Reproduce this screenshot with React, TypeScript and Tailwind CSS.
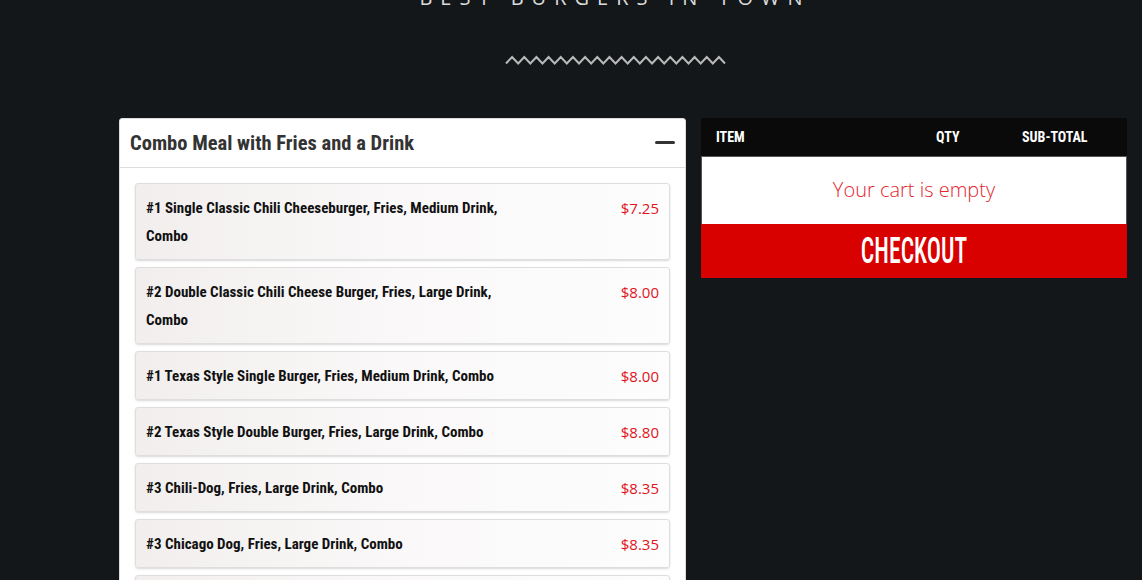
import React from "react";

const items = [
  { name: "#1 Single Classic Chili Cheeseburger, Fries, Medium Drink, Combo", price: "$7.25" },
  { name: "#2 Double Classic Chili Cheese Burger, Fries, Large Drink, Combo", price: "$8.00" },
  { name: "#1 Texas Style Single Burger, Fries, Medium Drink, Combo", price: "$8.00" },
  { name: "#2 Texas Style Double Burger, Fries, Large Drink, Combo", price: "$8.80" },
  { name: "#3 Chili-Dog, Fries, Large Drink, Combo", price: "$8.35" },
  { name: "#3 Chicago Dog, Fries, Large Drink, Combo", price: "$8.35" },
  { name: "#4 Fish Sandwich, Fries, Large Drink, Combo", price: "$8.35" },
];

function Zigzag() {
  const w = 219;
  const m = 36;
  const s2 = w / m;
  const pts: string[] = [];
  for (let i = 0; i <= m; i++) {
    pts.push(`${(1 + i * s2).toFixed(2)},${i % 2 === 0 ? 8.5 : 2}`);
  }
  return (
    <svg width="221" height="11" viewBox="0 0 221 11" className="block">
      <polyline points={pts.join(" ")} fill="none" stroke="#b9b9b9" strokeWidth="2" />
    </svg>
  );
}

const cond = "font-['Roboto_Condensed','DejaVu_Sans_Condensed',Roboto,sans-serif] [font-stretch:condensed]";

export default function App() {
  return (
    <div className="w-[1142px] h-[580px] overflow-hidden bg-[#13171a]">
      <div className="-mt-[16px] h-[28px] text-center text-[20px] leading-[28px] tracking-[8px] text-[#dcdcdc] font-['Open_Sans',sans-serif] pl-[88px]">
        BEST BURGERS IN TOWN
      </div>
      <div className="flex justify-center mt-[43px] pl-[89px]">
        <Zigzag />
      </div>
      <div className="flex mt-[52px] ml-[119px] gap-[15px]">
        <div className="w-[567px] bg-white rounded-t-[3px] border border-[#ddd]">
          <div className="h-[49px] flex items-center justify-between pl-[10px] pr-[10px] border-b border-[#ddd]">
            <div className={`text-[20.5px] font-bold text-[#333] mt-[1px] ${cond}`}>
              Combo Meal with Fries and a Drink
            </div>
            <div className="w-[20px] h-[3px] rounded-full bg-[#333] mt-[-2px]" />
          </div>
          <div className="px-[15px] pt-[15px] flex flex-col gap-[7px]">
            {items.map((it, i) => (
              <div
                key={i}
                className="flex justify-between items-start border border-[#dedede] rounded-[3px] bg-gradient-to-r from-[#f2eeee] via-[#faf8f8] to-[#fdfdfd] shadow-[0_1px_2px_rgba(0,0,0,0.15)] px-[10px] pt-[10px] pb-[9px]"
              >
                <div className={`w-[362px] text-[15px] leading-[28px] font-bold text-[#111] ${cond}`}>
                  {it.name}
                </div>
                <div className="text-[15px] leading-[28px] text-[#e0141e] font-['Open_Sans',sans-serif]">
                  {it.price}
                </div>
              </div>
            ))}
          </div>
        </div>
        <div className="w-[426px] self-start">
          <div className={`h-[38px] bg-[#0a0a0a] grid grid-cols-[220px_86px_1fr] items-center pl-[15px] text-white text-[14px] font-bold ${cond}`}>
            <div>ITEM</div>
            <div>QTY</div>
            <div>SUB-TOTAL</div>
          </div>
          <div className="h-[68px] bg-white border-t border-x border-[#555] flex items-center justify-center">
            <span className="text-[20px] font-light text-[#e3262f] font-['Open_Sans',sans-serif] -mt-[1px]">
              Your cart is empty
            </span>
          </div>
          <div className="h-[54px] bg-[#d90000] flex items-center justify-center">
            <span className={`inline-block text-[37px] leading-[40px] text-white font-medium scale-x-[0.64] ${cond}`}>
              CHECKOUT
            </span>
          </div>
        </div>
      </div>
    </div>
  );
}
